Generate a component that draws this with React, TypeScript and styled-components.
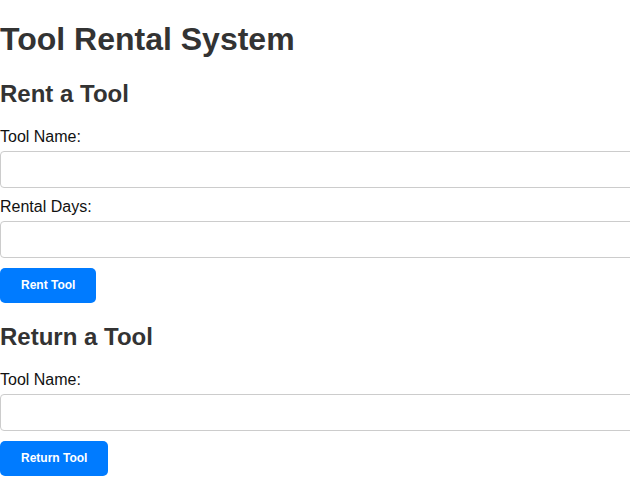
import React from "react";
import styled, { createGlobalStyle } from "styled-components";

const GlobalStyle = createGlobalStyle`
  html, body {
    margin: 0;
    padding: 0;
    overflow-x: hidden;
    background: #ffffff;
  }
  body {
    font-family: "Liberation Sans", Arial, sans-serif;
  }
`;

const Page = styled.div`
  display: flex;
  flex-direction: column;
`;

const Title = styled.h1`
  font-size: 32px;
  font-weight: bold;
  color: #333333;
  margin: 21.44px 0;
  line-height: normal;
`;

const SectionTitle = styled.h2`
  font-size: 24px;
  font-weight: bold;
  color: #333333;
  margin: 0 0 19.92px;
  line-height: normal;
`;

const Section = styled.section<{ $gapTop: number }>`
  display: flex;
  flex-direction: column;
  align-items: flex-start;
  margin-top: ${(p) => p.$gapTop}px;
`;

const Label = styled.label`
  display: block;
  font-size: 16px;
  color: #111111;
  line-height: normal;
  margin-bottom: 5px;
`;

const Input = styled.input`
  display: block;
  box-sizing: content-box;
  width: 100%;
  padding: 8px;
  margin: 0 0 10px;
  font-family: "Liberation Sans", Arial, sans-serif;
  font-size: 16px;
  line-height: normal;
  height: 19px;
  border: 1px solid #cccccc;
  border-radius: 4px;
  background: #ffffff;
`;

const Button = styled.button`
  display: inline-block;
  margin: 0;
  padding: 10px 21px;
  background: #007bff;
  color: #ffffff;
  border: none;
  border-radius: 5px;
  font-family: "Liberation Sans", Arial, sans-serif;
  font-size: 12px;
  font-weight: bold;
  line-height: 15px;
  cursor: pointer;
`;

export default function App() {
  return (
    <Page>
      <GlobalStyle />
      <Title>Tool Rental System</Title>
      <Section $gapTop={0}>
        <SectionTitle>Rent a Tool</SectionTitle>
        <Label htmlFor="rent-name">Tool Name:</Label>
        <Input id="rent-name" type="text" />
        <Label htmlFor="rent-days">Rental Days:</Label>
        <Input id="rent-days" type="number" />
        <Button type="button">Rent Tool</Button>
      </Section>
      <Section $gapTop={20}>
        <SectionTitle>Return a Tool</SectionTitle>
        <Label htmlFor="return-name">Tool Name:</Label>
        <Input id="return-name" type="text" />
        <Button type="button">Return Tool</Button>
      </Section>
    </Page>
  );
}
